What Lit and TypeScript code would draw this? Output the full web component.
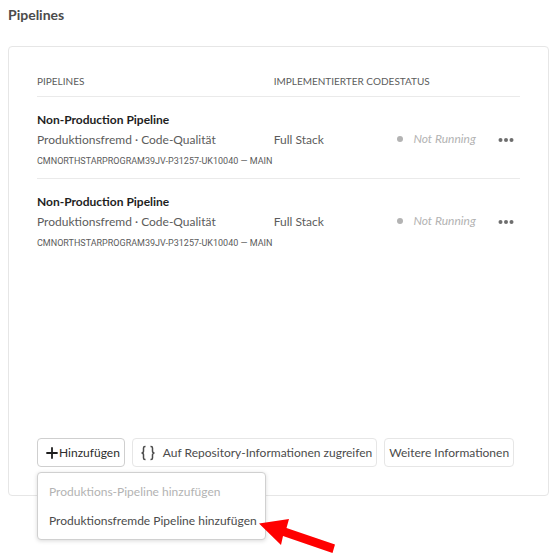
import { LitElement, html, css } from "lit";
import { customElement } from "lit/decorators.js";

interface Pipeline {
  name: string;
  kind: string;
  branch: string;
  code: string;
  status: string;
}

const pipelines: Pipeline[] = [1, 2].map(() => ({
  name: "Non-Production Pipeline",
  kind: "Produktionsfremd · Code-Qualität",
  branch: "CMNORTHSTARPROGRAM39JV-P31257-UK10040 — MAIN",
  code: "Full Stack",
  status: "Not Running",
}));

@customElement("app-root")
export class AppRoot extends LitElement {
  static styles = css`
    :host {
      display: block;
      box-sizing: border-box;
      min-height: 100vh;
      padding: 5px 5px 0 8px;
      font-family: Lato, "Noto Sans", sans-serif;
      font-size: 12px;
      line-height: 20px;
      color: #4b4b4b;
      background: #fff;
    }
    h2 {
      margin: 0 0 21px;
      font-size: 14px;
      line-height: 20px;
      font-weight: 700;
    }
    .card {
      box-sizing: border-box;
      min-height: 450px;
      display: flex;
      flex-direction: column;
      justify-content: space-between;
      padding: 24px 28px 28px;
      border: 1px solid #e6e6e6;
      border-radius: 4px;
    }
    table {
      width: 100%;
      table-layout: fixed;
      border-collapse: collapse;
      text-align: left;
    }
    .c-name { width: 49%; }
    .c-code { width: 25%; }
    .c-menu { width: 22px; }
    th {
      padding: 0 0 5px;
      font-size: 10px;
      line-height: 20px;
      font-weight: 400;
      color: #5c5c5c;
      white-space: nowrap;
    }
    tr { border-bottom: 1px solid #eaeaea; }
    tbody tr:last-child { border-bottom: 0; }
    td {
      padding: 12px 0 8px;
      white-space: nowrap;
      color: #5c5c5c;
    }
    td:first-child { padding: 13px 0 7px; }
    .name { font-weight: 700; color: #1e1e1e; }
    .branch { padding-top: 1px; font-family: Roboto, sans-serif; font-size: 9px; }
    .status {
      display: flex;
      align-items: center;
      gap: 10px;
      padding: 0 0 2px 3px;
      font-style: italic;
      color: #b3b3b3;
    }
    .dot {
      width: 6px;
      height: 6px;
      border-radius: 50%;
      background: #b3b3b3;
    }
    button {
      font: inherit;
      color: inherit;
      background: #fff;
      border: 0;
      padding: 0;
      cursor: pointer;
      white-space: nowrap;
    }
    svg { display: block; flex: none; }
    .more { display: block; padding: 8px 0; }
    .actions { display: flex; gap: 7px; }
    .btn {
      display: flex;
      align-items: center;
      height: 29px;
      padding: 0 4px;
      border: 1px solid #e6e6e6;
      border-radius: 4px;
    }
    .add { position: relative; }
    .add .btn { border-color: #cfcfcf; padding: 0 4px 0 8px; gap: 1px; color: #2c2c2c; }
    .repo { gap: 7px; padding: 0 4px 0 7px; }
    .menu {
      position: absolute;
      z-index: 1;
      top: 34px;
      left: 0;
      padding: 4px 0;
      border: 1px solid #d0d0d0;
      border-radius: 4px;
      background: #fff;
      box-shadow: 0 1px 4px rgba(0, 0, 0, 0.15);
    }
    .item { display: block; width: 100%; height: 29px; padding: 0 8px 0 11px; text-align: left; background: none; }
    .item:disabled { color: #b3b3b3; cursor: default; }
    .arrow { position: absolute; left: 100%; top: 45px; margin-left: -6px; }
  `;

  private row(p: Pipeline) {
    return html`<tr>
      <td>
        <div class="name">${p.name}</div>
        <div>${p.kind}</div>
        <div class="branch">${p.branch}</div>
      </td>
      <td>${p.code}</td>
      <td><div class="status"><span class="dot"></span>${p.status}</div></td>
      <td>
        <button class="more" aria-label="Weitere Aktionen">
          <svg width="16" height="4" viewBox="0 0 16 4" fill="#6e6e6e">
            <circle cx="2.5" cy="2" r="2" /><circle cx="8" cy="2" r="2" /><circle cx="13.5" cy="2" r="2" />
          </svg>
        </button>
      </td>
    </tr>`;
  }

  render() {
    return html`
      <h2>Pipelines</h2>
      <section class="card">
        <table>
          <colgroup><col class="c-name" /><col class="c-code" /><col /><col class="c-menu" /></colgroup>
          <thead>
            <tr><th>PIPELINES</th><th>IMPLEMENTIERTER CODE</th><th>STATUS</th><th></th></tr>
          </thead>
          <tbody>${pipelines.map((p) => this.row(p))}</tbody>
        </table>
        <div class="actions">
          <div class="add">
            <button class="btn" aria-expanded="true">
              <svg width="12" height="12" viewBox="0 0 12 12" stroke="#1e1e1e" stroke-width="1.8" stroke-linecap="round">
                <path d="M6 1v10M1 6h10" />
              </svg>
              Hinzufügen
            </button>
            <div class="menu" role="menu">
              <button class="item" role="menuitem" disabled>Produktions-Pipeline hinzufügen</button>
              <button class="item" role="menuitem">Produktionsfremde Pipeline hinzufügen</button>
              <svg class="arrow" width="77" height="36" viewBox="0 0 77 36" fill="#f00">
                <path d="M0 5.500L30 1L27.500 10L76 26.500L73.500 35L24 18L22 27Z" />
              </svg>
            </div>
          </div>
          <button class="btn repo">
            <svg width="16" height="16" viewBox="0 0 16 16" fill="none" stroke="#4b4b4b" stroke-width="1.5">
              <path d="M5.500 1.500H5Q3.500 1.500 3.500 3V6Q3.500 8 1.500 8Q3.500 8 3.500 10V13Q3.500 14.500 5 14.500H5.500M10.500 1.500H11Q12.500 1.500 12.500 3V6Q12.500 8 14.500 8Q12.500 8 12.500 10V13Q12.500 14.500 11 14.500H10.500" />
            </svg>
            Auf Repository-Informationen zugreifen
          </button>
          <button class="btn">Weitere Informationen</button>
        </div>
      </section>
    `;
  }
}
